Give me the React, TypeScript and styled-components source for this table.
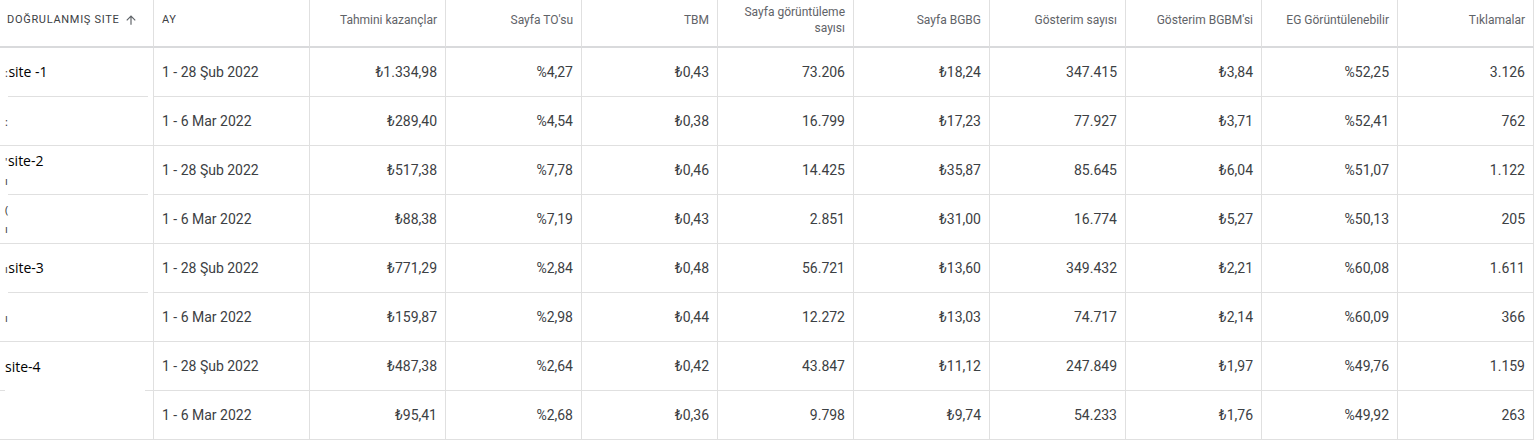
import React from "react";
import styled, { createGlobalStyle, css } from "styled-components";

const GlobalStyle = createGlobalStyle`
  html, body { margin: 0; padding: 0; background: #ffffff; }
  body { font-family: Roboto, "Liberation Sans", Arial, sans-serif; }
`;

const LINE = "#e0e0e0";

const Grid = styled.div`
  display: grid;
  grid-template-columns: 154px 156px repeat(9, 136px);
  width: 1534px;
  background: #fff;
`;

const HeadCell = styled.div<{ $align: "left" | "right" }>`
  box-sizing: border-box;
  height: 48px;
  padding: 0 8px 6px 8px;
  border-right: 1px solid ${LINE};
  border-bottom: 2px solid #d9dadc;
  display: flex;
  align-items: center;
  justify-content: ${(p) => (p.$align === "right" ? "flex-end" : "flex-start")};
  text-align: ${(p) => p.$align};
  font-size: 12px;
  line-height: 16px;
  color: #5f6368;
`;

const HeadCaps = styled.span`
  font-size: 11px;
  letter-spacing: 0.7px;
  text-transform: uppercase;
  color: #3c4043;
  display: inline-flex;
  align-items: center;
  gap: 5px;
`;

const FirstHead = styled(HeadCell)`
  padding-left: 7px;
`;

const Cell = styled.div<{ $align: "left" | "right" }>`
  box-sizing: border-box;
  height: 49px;
  padding: 0 8px;
  border-right: 1px solid ${LINE};
  border-bottom: 1px solid ${LINE};
  display: flex;
  align-items: center;
  justify-content: ${(p) => (p.$align === "right" ? "flex-end" : "flex-start")};
  font-size: 14px;
  color: #3c4043;
  white-space: nowrap;
`;

type Divider = "inset" | "stubs" | "full";

const SiteCell = styled.div<{ $divider: Divider }>`
  box-sizing: border-box;
  height: 49px;
  padding: 0 0 0 5px;
  border-right: 1px solid ${LINE};
  display: flex;
  flex-direction: column;
  justify-content: center;
  font-family: "Open Sans", "Noto Sans", sans-serif;
  font-size: 14px;
  line-height: 19px;
  color: #000;
  background-repeat: no-repeat;
  ${(p) =>
    p.$divider === "full"
      ? css`
          border-bottom: 1px solid ${LINE};
        `
      : p.$divider === "inset"
      ? css`
          padding-bottom: 1px;
          background-image: linear-gradient(${LINE}, ${LINE});
          background-position: left 8px bottom 0;
          background-size: 140px 1px;
        `
      : css`
          padding-bottom: 1px;
          background-image: linear-gradient(${LINE}, ${LINE}),
            linear-gradient(${LINE}, ${LINE});
          background-position: left 0 bottom 0, right 0 bottom 0;
          background-size: 5px 1px, 8px 1px;
        `}
`;

const SiteLine = styled.div`
  display: flex;
  align-items: baseline;
  white-space: nowrap;
`;

const Fragment = styled.span`
  font-size: 11px;
  color: #333;
  margin-right: 0.5px;
`;

const SiteName = styled.span``;

const SortIcon = () => (
  <svg width="14" height="14" viewBox="0 0 24 24" aria-hidden="true">
    <path
      fill="#5f6368"
      d="M4 12l1.41 1.41L11 7.83V20h2V7.83l5.58 5.59L20 12l-8-8-8 8z"
    />
  </svg>
);

const headers = [
  "Tahmini kazançlar",
  "Sayfa TO'su",
  "TBM",
  "Sayfa görüntüleme sayısı",
  "Sayfa BGBG",
  "Gösterim sayısı",
  "Gösterim BGBM'si",
  "EG Görüntülenebilir",
  "Tıklamalar",
];

type SiteLineSpec = { frag?: string; name?: string };
type RowSpec = {
  site: SiteLineSpec[];
  divider: Divider;
  month: string;
  values: string[];
};

const FEB = "1 - 28 Şub 2022";
const MAR = "1 - 6 Mar 2022";

const rows: RowSpec[] = [
  {
    site: [{ frag: ":", name: "site -1" }],
    divider: "inset",
    month: FEB,
    values: ["₺1.334,98", "%4,27", "₺0,43", "73.206", "₺18,24", "347.415", "₺3,84", "%52,25", "3.126"],
  },
  {
    site: [{ frag: ":" }],
    divider: "full",
    month: MAR,
    values: ["₺289,40", "%4,54", "₺0,38", "16.799", "₺17,23", "77.927", "₺3,71", "%52,41", "762"],
  },
  {
    site: [{ frag: "'", name: "site-2" }, { frag: "ı" }],
    divider: "inset",
    month: FEB,
    values: ["₺517,38", "%7,78", "₺0,46", "14.425", "₺35,87", "85.645", "₺6,04", "%51,07", "1.122"],
  },
  {
    site: [{ frag: "(" }, { frag: "ı" }],
    divider: "full",
    month: MAR,
    values: ["₺88,38", "%7,19", "₺0,43", "2.851", "₺31,00", "16.774", "₺5,27", "%50,13", "205"],
  },
  {
    site: [{ frag: "ı", name: "site-3" }],
    divider: "inset",
    month: FEB,
    values: ["₺771,29", "%2,84", "₺0,48", "56.721", "₺13,60", "349.432", "₺2,21", "%60,08", "1.611"],
  },
  {
    site: [{ frag: "ı" }],
    divider: "full",
    month: MAR,
    values: ["₺159,87", "%2,98", "₺0,44", "12.272", "₺13,03", "74.717", "₺2,14", "%60,09", "366"],
  },
  {
    site: [{ name: "site-4" }],
    divider: "stubs",
    month: FEB,
    values: ["₺487,38", "%2,64", "₺0,42", "43.847", "₺11,12", "247.849", "₺1,97", "%49,76", "1.159"],
  },
  {
    site: [],
    divider: "full",
    month: MAR,
    values: ["₺95,41", "%2,68", "₺0,36", "9.798", "₺9,74", "54.233", "₺1,76", "%49,92", "263"],
  },
];

export default function App() {
  return (
    <>
      <GlobalStyle />
      <Grid>
        <FirstHead $align="left">
          <HeadCaps>
            Doğrulanmış site
            <SortIcon />
          </HeadCaps>
        </FirstHead>
        <HeadCell $align="left">
          <HeadCaps>AY</HeadCaps>
        </HeadCell>
        {headers.map((h) => (
          <HeadCell key={h} $align="right">
            {h}
          </HeadCell>
        ))}
        {rows.map((r, i) => (
          <React.Fragment key={i}>
            <SiteCell $divider={r.divider}>
              {r.site.map((l, j) => (
                <SiteLine key={j}>
                  {l.frag ? <Fragment>{l.frag}</Fragment> : null}
                  {l.name ? <SiteName>{l.name}</SiteName> : null}
                </SiteLine>
              ))}
            </SiteCell>
            <Cell $align="left">{r.month}</Cell>
            {r.values.map((v, k) => (
              <Cell key={k} $align="right">
                {v}
              </Cell>
            ))}
          </React.Fragment>
        ))}
      </Grid>
    </>
  );
}
